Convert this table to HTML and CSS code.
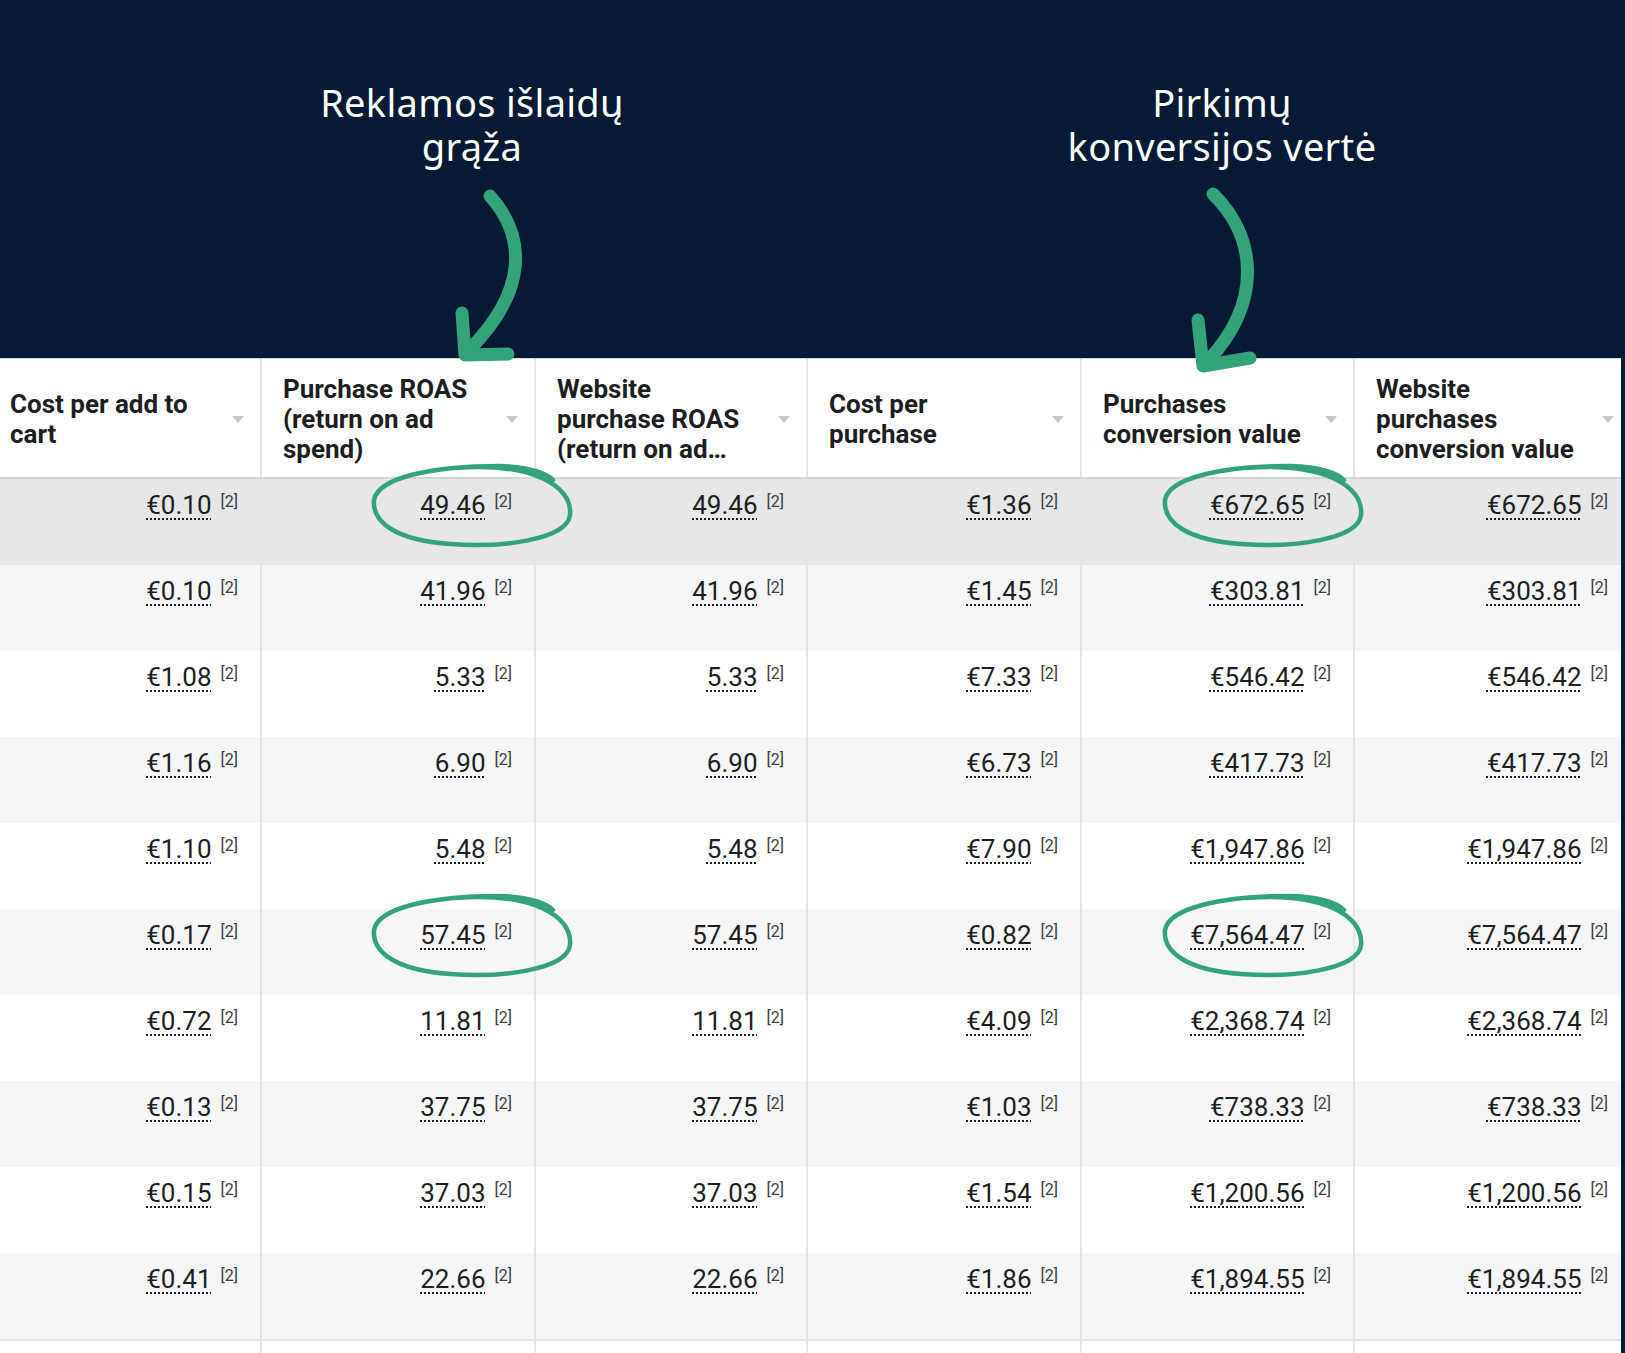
FILE: index.html
```html
<!DOCTYPE html>
<html lang="lt">
<head>
<meta charset="utf-8">
<title>ROAS</title>
<link rel="stylesheet" href="styles.css">
</head>
<body>
<div class="page">
  <header class="banner">
    <div class="label label-roas"><div class="line">Reklamos išlaidų</div><div class="line">grąža</div></div>
    <div class="label label-value"><div class="line">Pirkimų</div><div class="line">konversijos vertė</div></div>
  </header>
  <div class="table-wrap">
    <div class="table">
      <div class="row head">
        <div class="hcell"><span class="htext">Cost per add to<br>cart</span><span class="sort"></span></div>
        <div class="hcell"><span class="htext">Purchase ROAS<br>(return on ad<br>spend)</span><span class="sort"></span></div>
        <div class="hcell"><span class="htext">Website<br>purchase ROAS<br>(return on ad…</span><span class="sort"></span></div>
        <div class="hcell"><span class="htext">Cost per<br>purchase</span><span class="sort"></span></div>
        <div class="hcell"><span class="htext">Purchases<br>conversion value</span><span class="sort"></span></div>
        <div class="hcell"><span class="htext">Website<br>purchases<br>conversion value</span><span class="sort"></span></div>
      </div>
      <div id="rows"></div>
      <div class="row tail"><div></div><div></div><div></div><div></div><div></div><div></div></div>
    </div>
  </div>
  <svg class="marks" width="1625" height="1353" viewBox="0 0 1625 1353" xmlns="http://www.w3.org/2000/svg">
    <g fill="none" stroke="#33a37a" stroke-linecap="round" stroke-linejoin="round">
      <g stroke-width="13">
        <path d="M490,196 C525,235 530,290 467,352"/>
        <path d="M462,313 L465,355 L508,354"/>
        <path d="M1213,194 C1255,235 1265,300 1207,362"/>
        <path d="M1198,320 L1203,366 L1250,358"/>
      </g>
      <g stroke-width="4.5">
        <path transform="translate(472,506)" d="M-17,-38 C58,-44 101,-21 98,9 C95,34 28,42 -22,38 C-77,34 -100,16 -98,-6 C-94,-28 -42,-40 28,-40 C53,-39 73,-34 81,-26"/>
        <path transform="translate(472,936)" d="M-17,-38 C58,-44 101,-21 98,9 C95,34 28,42 -22,38 C-77,34 -100,16 -98,-6 C-94,-28 -42,-40 28,-40 C53,-39 73,-34 81,-26"/>
        <path transform="translate(1263,506)" d="M-17,-38 C58,-44 101,-21 98,9 C95,34 28,42 -22,38 C-77,34 -100,16 -98,-6 C-94,-28 -42,-40 28,-40 C53,-39 73,-34 81,-26"/>
        <path transform="translate(1263,936)" d="M-17,-38 C58,-44 101,-21 98,9 C95,34 28,42 -22,38 C-77,34 -100,16 -98,-6 C-94,-28 -42,-40 28,-40 C53,-39 73,-34 81,-26"/>
      </g>
    </g>
  </svg>
</div>
<script src="app.js"></script>
</body>
</html>
```
FILE: app.js
```js
const data = [
  ["€0.10","49.46","49.46","€1.36","€672.65","€672.65"],
  ["€0.10","41.96","41.96","€1.45","€303.81","€303.81"],
  ["€1.08","5.33","5.33","€7.33","€546.42","€546.42"],
  ["€1.16","6.90","6.90","€6.73","€417.73","€417.73"],
  ["€1.10","5.48","5.48","€7.90","€1,947.86","€1,947.86"],
  ["€0.17","57.45","57.45","€0.82","€7,564.47","€7,564.47"],
  ["€0.72","11.81","11.81","€4.09","€2,368.74","€2,368.74"],
  ["€0.13","37.75","37.75","€1.03","€738.33","€738.33"],
  ["€0.15","37.03","37.03","€1.54","€1,200.56","€1,200.56"],
  ["€0.41","22.66","22.66","€1.86","€1,894.55","€1,894.55"]
];
const rows = document.getElementById("rows");
data.forEach((r, i) => {
  const row = document.createElement("div");
  row.className = "row data " + (i === 0 ? "selected" : (i % 2 === 1 ? "alt" : "plain"));
  r.forEach(v => {
    const c = document.createElement("div");
    c.className = "cell";
    c.innerHTML = '<span class="val">' + v + '</span><span class="ref">[2]</span>';
    row.appendChild(c);
  });
  rows.appendChild(row);
});
```
FILE: styles.css
```css
html, body {
  margin: 0;
  padding: 0;
}
body {
  background: #061a35;
  width: 1625px;
  height: 1353px;
  overflow: hidden;
}
.page {
  position: relative;
  width: 1625px;
  height: 1353px;
}
.banner {
  height: 358px;
  box-sizing: border-box;
  padding-top: 80px;
  display: flex;
  font-family: "Noto Sans", "Open Sans", sans-serif;
  font-weight: 400;
  font-size: 38px;
  letter-spacing: 0.3px;
  color: #ffffff;
  text-align: center;
}
.label {
  width: 440px;
}
.line {
  height: 44px;
  line-height: 44px;
}
.label-roas {
  margin-left: 252px;
}
.label-value {
  margin-left: 310px;
}
.table-wrap {
  width: 1621px;
  height: 995px;
  overflow: hidden;
  background: #ffffff;
}
.table {
  margin-left: -11px;
  width: 1645px;
}
.row {
  display: grid;
  grid-template-columns: 273px 274px 272px 274px 273px 277px;
}
.row > div {
  border-right: 2px solid #e3e5e8;
  box-sizing: border-box;
}
.head {
  height: 121px;
  box-sizing: border-box;
  border-top: 1px solid #d6d9dc;
  border-bottom: 2px solid #d3d6da;
  background: #ffffff;
}
.hcell {
  display: flex;
  align-items: center;
  justify-content: space-between;
  padding: 2px 16px 0 21px;
  font-family: Roboto, "Liberation Sans", sans-serif;
  font-weight: 700;
  font-size: 26px;
  line-height: 30px;
  color: #1c1e21;
}
.sort {
  width: 0;
  height: 0;
  border-left: 6.5px solid transparent;
  border-right: 6.5px solid transparent;
  border-top: 7px solid #c3c6ca;
  flex: none;
}
.data {
  height: 86px;
}
.selected { background: #e5e7e8; }
.alt { background: #f5f6f7; }
.plain { background: #ffffff; }
.cell {
  padding: 11px 22px 0 0;
  text-align: right;
  font-family: Roboto, "Liberation Sans", sans-serif;
  font-size: 26px;
  line-height: 30px;
  color: #1c1e21;
  white-space: nowrap;
}
.val {
  text-decoration: underline dotted 2px #1c1e21;
  text-underline-offset: 4px;
}
.ref {
  display: inline-block;
  vertical-align: top;
  margin-left: 9px;
  margin-top: 3px;
  font-size: 16px;
  line-height: 18px;
  color: #3a3d42;
}
.tail {
  height: 20px;
  border-top: 2px solid #e1e3e6;
  background: #ffffff;
}
.marks {
  position: absolute;
  left: 0;
  top: 0;
  pointer-events: none;
}
```
